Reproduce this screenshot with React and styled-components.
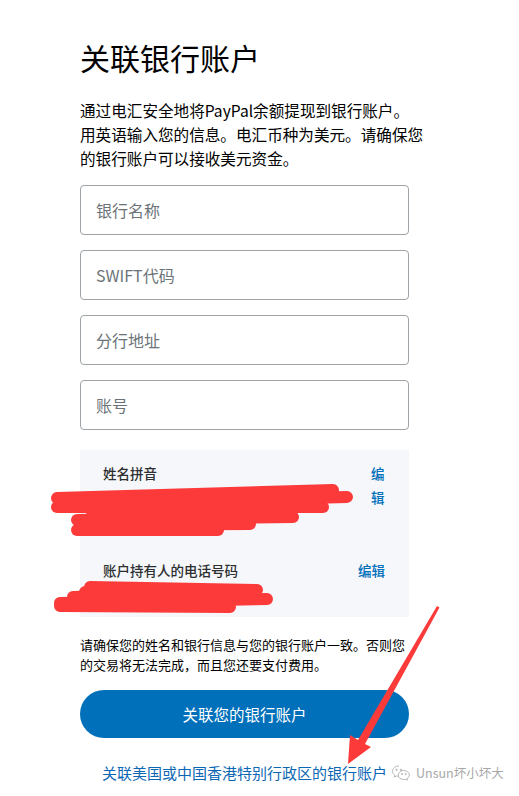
import React from "react";
import styled, { createGlobalStyle } from "styled-components";

const Global = createGlobalStyle`
  html, body { margin: 0; padding: 0; background: #fff; }
  body { font-family: "Noto Sans CJK SC", "Noto Sans", sans-serif; color: #2c2e2f; }
  * { box-sizing: border-box; }
`;

const Page = styled.div`
  position: relative;
  width: 519px;
  height: 796px;
  overflow: hidden;
  padding: 37px 0 0 80px;
`;

const Column = styled.div`
  width: 329px;
  display: flex;
  flex-direction: column;
`;

const Title = styled.h1`
  margin: 0;
  font-size: 30px;
  line-height: 40px;
  font-weight: 400;
  color: #000;
`;

const Intro = styled.p`
  margin: 21px 0 0;
  font-size: 15.6px;
  line-height: 24px;
  color: #000;
  white-space: nowrap;
`;

const Fields = styled.div`
  margin-top: 15px;
  display: flex;
  flex-direction: column;
  gap: 15px;
`;

const Input = styled.input`
  height: 50px;
  width: 100%;
  border: 1px solid #9da3a6;
  border-radius: 4px;
  padding: 0 15px;
  font-family: inherit;
  font-size: 16px;
  color: #2c2e2f;
  background: #fff;
  outline: none;
  &::placeholder { color: #6c7378; }
`;

const Info = styled.div`
  margin-top: 20px;
  background: #f5f7fa;
  padding: 11px 24px 11px 23px;
  display: flex;
  flex-direction: column;
  gap: 25px;
`;

const InfoRow = styled.div`
  display: flex;
  align-items: flex-start;
  justify-content: space-between;
  gap: 8px;
`;

const InfoText = styled.div`
  flex: 1;
  display: flex;
  flex-direction: column;
`;

const Label = styled.div`
  font-size: 13.5px;
  line-height: 24px;
  font-weight: 500;
  color: #2c2e2f;
`;

const Value = styled.div`
  font-size: 13.5px;
  line-height: 24px;
  color: #2c2e2f;
  min-height: ${(p) => p.$lines * 24}px;
  text-align: ${(p) => (p.$right ? "right" : "left")};
  padding-right: ${(p) => (p.$right ? "22px" : "0")};
`;

const Edit = styled.a`
  font-size: 13.5px;
  line-height: 24px;
  font-weight: 500;
  color: #0070ba;
  text-decoration: none;
  width: ${(p) => (p.$narrow ? "14px" : "auto")};
  word-break: break-all;
`;

const Notice = styled.p`
  margin: 18px 0 0;
  font-size: 13px;
  line-height: 20px;
  color: #000;
  white-space: nowrap;
`;

const Primary = styled.button`
  margin-top: 15px;
  height: 48px;
  width: 100%;
  border: none;
  border-radius: 24px;
  background: #0070ba;
  color: #fff;
  font-family: inherit;
  font-size: 15.5px;
`;

const LinkLine = styled.a`
  margin-top: 23px;
  display: block;
  text-align: center;
  font-size: 15px;
  line-height: 24px;
  color: #0b67b4;
  text-decoration: none;
  white-space: nowrap;
`;

const Overlay = styled.svg`
  position: absolute;
  left: 0;
  top: 0;
  width: 519px;
  height: 796px;
  pointer-events: none;
`;

const Watermark = styled.div`
  position: absolute;
  left: 391px;
  top: 762px;
  display: flex;
  align-items: center;
  gap: 5px;
  font-family: "Noto Sans CJK SC", "Noto Sans", sans-serif;
  font-size: 12.5px;
  line-height: 22px;
  color: #a8a8a8;
`;

const scribbles = [
  [57, 498, 333, 490],
  [57, 507, 323, 507],
  [93, 504, 347, 497],
  [77, 520, 293, 517],
  [77, 530, 218, 530],
  [113, 513, 273, 511],
  [60, 502, 300, 500],
  [80, 525, 250, 524],
  [90, 509, 280, 506],
  [90, 587, 257, 590],
  [60, 603, 267, 599],
  [60, 606, 230, 607],
  [73, 597, 240, 593],
  [85, 592, 255, 595],
];

export default function App() {
  return (
    <>
      <Global />
      <Page>
        <Column>
          <Title>关联银行账户</Title>
          <Intro>
            通过电汇安全地将PayPal余额提现到银行账户。
            <br />
            用英语输入您的信息。电汇币种为美元。请确保您
            <br />
            的银行账户可以接收美元资金。
          </Intro>
          <Fields>
            <Input placeholder="银行名称" />
            <Input placeholder="SWIFT代码" />
            <Input placeholder="分行地址" />
            <Input placeholder="账号" />
          </Fields>
          <Info>
            <InfoRow>
              <InfoText>
                <Label>姓名拼音</Label>
                <Value $lines={2} $right>od</Value>
              </InfoText>
              <Edit $narrow>编辑</Edit>
            </InfoRow>
            <InfoRow>
              <InfoText>
                <Label>账户持有人的电话号码</Label>
                <Value $lines={1}>+86</Value>
              </InfoText>
              <Edit>编辑</Edit>
            </InfoRow>
          </Info>
          <Notice>
            请确保您的姓名和银行信息与您的银行账户一致。否则您
            <br />
            的交易将无法完成，而且您还要支付费用。
          </Notice>
          <Primary>关联您的银行账户</Primary>
          <LinkLine>关联美国或中国香港特别行政区的银行账户</LinkLine>
        </Column>

        <Overlay viewBox="0 0 519 796">
          {scribbles.map(([x1, y1, x2, y2], i) => (
            <line
              key={i}
              x1={x1}
              y1={y1}
              x2={x2}
              y2={y2}
              stroke="#fc3a3a"
              strokeWidth="12"
              strokeLinecap="round"
            />
          ))}
          <polygon
            points="437,606 439.5,607.5 365,744 371,747 348,764 350,735 358,740"
            fill="#fc3a3a"
          />
        </Overlay>

        <Watermark>
          <svg width="20" height="18" viewBox="0 0 20 18" fill="none" stroke="#b8b8b8" strokeWidth="1">
            <path d="M8 2C4.4 2 1.5 4.3 1.5 7.2c0 1.6.9 3 2.3 4l-.6 1.9 2.2-1.1c.8.2 1.6.4 2.5.4" />
            <path d="M12.8 6.5c-3.1 0-5.6 2-5.6 4.5s2.5 4.5 5.6 4.5c.7 0 1.3-.1 1.9-.3l1.8.9-.5-1.6c1.4-.8 2.3-2.1 2.3-3.5 0-2.5-2.5-4.5-5.5-4.5z" />
            <circle cx="5.5" cy="5.8" r=".7" fill="#b8b8b8" />
            <circle cx="10" cy="5.8" r=".7" fill="#b8b8b8" />
            <circle cx="11" cy="10" r=".6" fill="#b8b8b8" />
            <circle cx="14.6" cy="10" r=".6" fill="#b8b8b8" />
          </svg>
          <span>Unsun坏小坏大</span>
        </Watermark>
      </Page>
    </>
  );
}
